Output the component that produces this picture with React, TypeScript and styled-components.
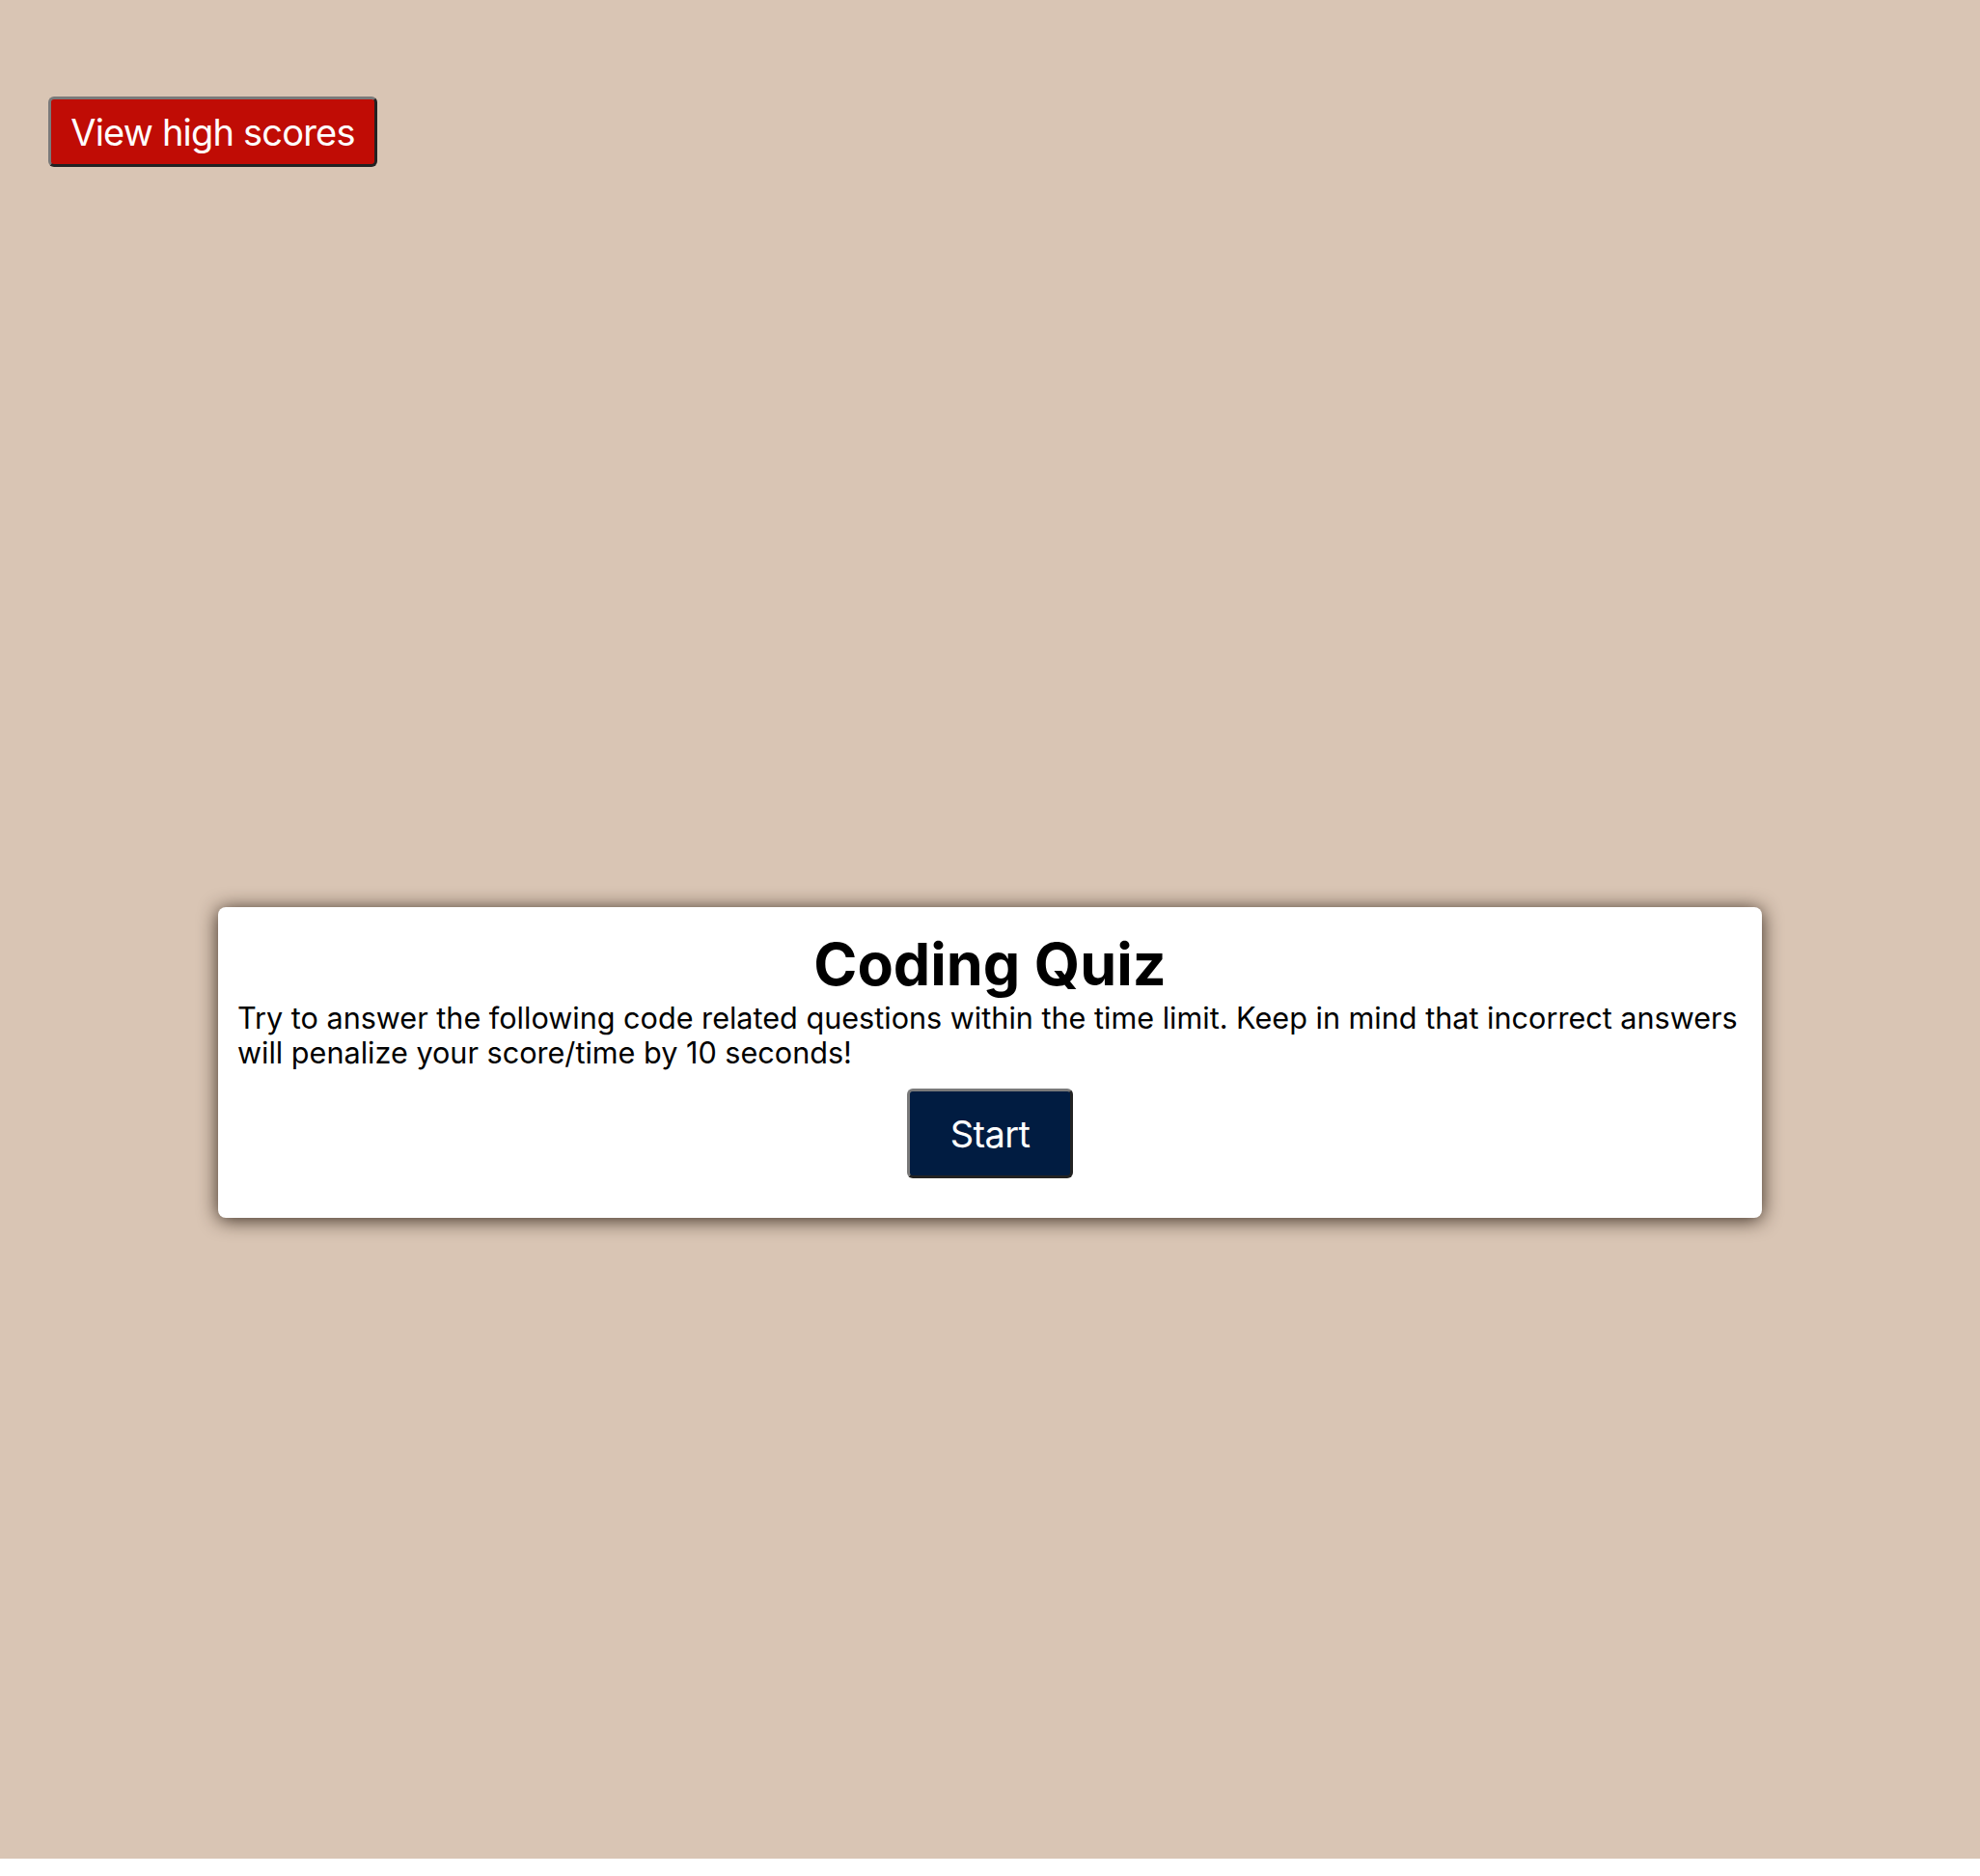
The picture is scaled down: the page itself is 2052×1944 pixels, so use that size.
import styled, { createGlobalStyle } from "styled-components";

const GlobalStyle = createGlobalStyle`
  html, body {
    margin: 0;
    padding: 0;
    background: #ffffff;
  }
  body {
    font-family: Inter, "Noto Sans", "Liberation Sans", sans-serif;
  }
`;

const Page = styled.div`
  height: 1926px;
  background-color: #d9c5b4;
  padding: 100px 0 0 50px;
  box-sizing: border-box;
  display: flex;
  flex-direction: column;
`;

const Header = styled.header`
  display: flex;
`;

const Button = styled.button<{ $color: string }>`
  font-family: Inter, "Noto Sans", "Liberation Sans", sans-serif;
  font-size: 38px;
  letter-spacing: ${(props) => (props.$color === "red" ? "-0.8px" : "-0.6px")};
  color: #ffffff;
  background-color: ${(props) =>
    props.$color === "red" ? "#c00c05" : "#011c41"};
  border-width: 3px;
  border-style: solid;
  border-color: #7a7a7a #222222 #222222 #7a7a7a;
  border-radius: 6px;
  cursor: pointer;
`;

const ScoresButton = styled(Button)`
  width: 341px;
  height: 73px;
  padding: 0;
`;

const StartButton = styled(Button)`
  width: 172px;
  height: 93px;
  padding: 0;
  align-self: center;
`;

const Card = styled.section`
  width: 1600px;
  box-sizing: border-box;
  margin: 767px 0 0 176px;
  background: #ffffff;
  border-radius: 8px;
  box-shadow: 0 2px 20px rgba(35, 22, 12, 0.9);
  padding: 21px 20px 41px 20px;
  display: flex;
  flex-direction: column;
  color: #000000;
`;

const Title = styled.h1`
  margin: 0;
  font-size: 61px;
  font-weight: 700;
  line-height: 76px;
  text-align: center;
`;

const Intro = styled.p`
  margin: 0 0 19px 0;
  font-size: 30.6px;
  line-height: 36px;
`;

export default function App() {
  return (
    <>
      <GlobalStyle />
      <Page>
        <Header>
          <ScoresButton $color="red">View high scores</ScoresButton>
        </Header>
        <Card>
          <Title>Coding Quiz</Title>
          <Intro>
            Try to answer the following code related questions within the time
            limit. Keep in mind that incorrect answers will penalize your
            score/time by 10 seconds!
          </Intro>
          <StartButton $color="navy">Start</StartButton>
        </Card>
      </Page>
    </>
  );
}
